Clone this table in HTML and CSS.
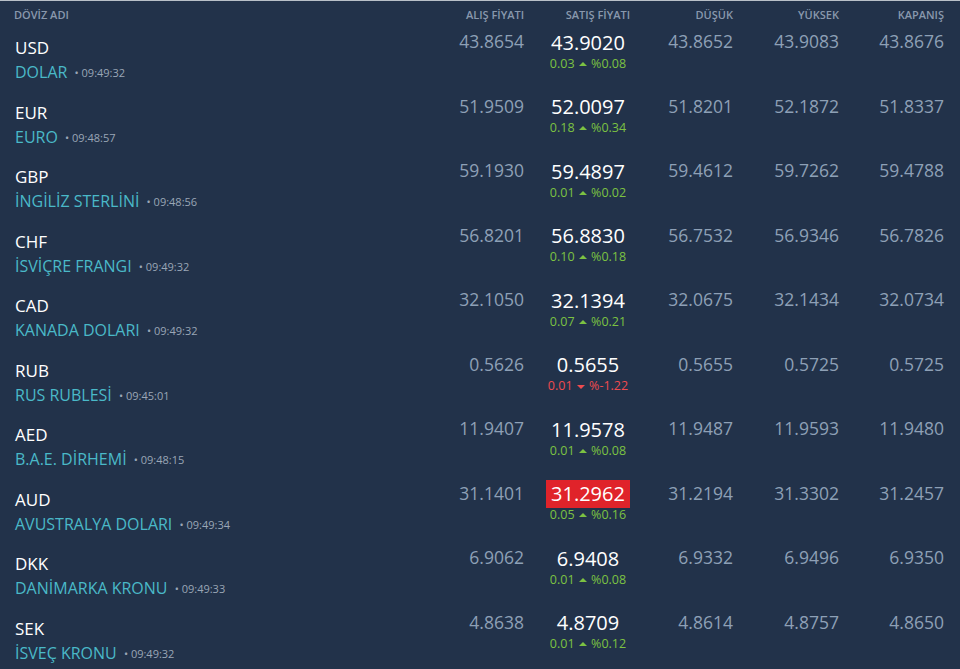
FILE: index.html
```html
<!DOCTYPE html>
<html lang="tr">
<head>
<meta charset="utf-8">
<link rel="stylesheet" href="styles.css">
</head>
<body>
<div class="table">
  <div class="row head">
    <div class="c-name">DÖVİZ ADI</div>
    <div class="c-num">ALIŞ FİYATI</div>
    <div class="c-num">SATIŞ FİYATI</div>
    <div class="c-num">DÜŞÜK</div>
    <div class="c-num">YÜKSEK</div>
    <div class="c-num">KAPANIŞ</div>
  </div>

  <div class="row">
    <div class="c-name"><div class="code">USD</div><div class="name">DOLAR <span class="time">• 09:49:32</span></div></div>
    <div class="c-num val">43.8654</div>
    <div class="c-sell"><span class="sell">43.9020</span><span class="chg up">0.03 <i class="tri"></i> %0.08</span></div>
    <div class="c-num val">43.8652</div>
    <div class="c-num val">43.9083</div>
    <div class="c-num val">43.8676</div>
  </div>

  <div class="row">
    <div class="c-name"><div class="code">EUR</div><div class="name">EURO <span class="time">• 09:48:57</span></div></div>
    <div class="c-num val">51.9509</div>
    <div class="c-sell"><span class="sell">52.0097</span><span class="chg up">0.18 <i class="tri"></i> %0.34</span></div>
    <div class="c-num val">51.8201</div>
    <div class="c-num val">52.1872</div>
    <div class="c-num val">51.8337</div>
  </div>

  <div class="row">
    <div class="c-name"><div class="code">GBP</div><div class="name">İNGİLİZ STERLİNİ <span class="time">• 09:48:56</span></div></div>
    <div class="c-num val">59.1930</div>
    <div class="c-sell"><span class="sell">59.4897</span><span class="chg up">0.01 <i class="tri"></i> %0.02</span></div>
    <div class="c-num val">59.4612</div>
    <div class="c-num val">59.7262</div>
    <div class="c-num val">59.4788</div>
  </div>

  <div class="row">
    <div class="c-name"><div class="code">CHF</div><div class="name">İSVİÇRE FRANGI <span class="time">• 09:49:32</span></div></div>
    <div class="c-num val">56.8201</div>
    <div class="c-sell"><span class="sell">56.8830</span><span class="chg up">0.10 <i class="tri"></i> %0.18</span></div>
    <div class="c-num val">56.7532</div>
    <div class="c-num val">56.9346</div>
    <div class="c-num val">56.7826</div>
  </div>

  <div class="row">
    <div class="c-name"><div class="code">CAD</div><div class="name">KANADA DOLARI <span class="time">• 09:49:32</span></div></div>
    <div class="c-num val">32.1050</div>
    <div class="c-sell"><span class="sell">32.1394</span><span class="chg up">0.07 <i class="tri"></i> %0.21</span></div>
    <div class="c-num val">32.0675</div>
    <div class="c-num val">32.1434</div>
    <div class="c-num val">32.0734</div>
  </div>

  <div class="row">
    <div class="c-name"><div class="code">RUB</div><div class="name">RUS RUBLESİ <span class="time">• 09:45:01</span></div></div>
    <div class="c-num val">0.5626</div>
    <div class="c-sell"><span class="sell">0.5655</span><span class="chg down">0.01 <i class="tri"></i> %-1.22</span></div>
    <div class="c-num val">0.5655</div>
    <div class="c-num val">0.5725</div>
    <div class="c-num val">0.5725</div>
  </div>

  <div class="row">
    <div class="c-name"><div class="code">AED</div><div class="name">B.A.E. DİRHEMİ <span class="time">• 09:48:15</span></div></div>
    <div class="c-num val">11.9407</div>
    <div class="c-sell"><span class="sell">11.9578</span><span class="chg up">0.01 <i class="tri"></i> %0.08</span></div>
    <div class="c-num val">11.9487</div>
    <div class="c-num val">11.9593</div>
    <div class="c-num val">11.9480</div>
  </div>

  <div class="row">
    <div class="c-name"><div class="code">AUD</div><div class="name">AVUSTRALYA DOLARI <span class="time">• 09:49:34</span></div></div>
    <div class="c-num val">31.1401</div>
    <div class="c-sell"><span class="sell flash">31.2962</span><span class="chg up">0.05 <i class="tri"></i> %0.16</span></div>
    <div class="c-num val">31.2194</div>
    <div class="c-num val">31.3302</div>
    <div class="c-num val">31.2457</div>
  </div>

  <div class="row">
    <div class="c-name"><div class="code">DKK</div><div class="name">DANİMARKA KRONU <span class="time">• 09:49:33</span></div></div>
    <div class="c-num val">6.9062</div>
    <div class="c-sell"><span class="sell">6.9408</span><span class="chg up">0.01 <i class="tri"></i> %0.08</span></div>
    <div class="c-num val">6.9332</div>
    <div class="c-num val">6.9496</div>
    <div class="c-num val">6.9350</div>
  </div>

  <div class="row">
    <div class="c-name"><div class="code">SEK</div><div class="name">İSVEÇ KRONU <span class="time">• 09:49:32</span></div></div>
    <div class="c-num val">4.8638</div>
    <div class="c-sell"><span class="sell">4.8709</span><span class="chg up">0.01 <i class="tri"></i> %0.12</span></div>
    <div class="c-num val">4.8614</div>
    <div class="c-num val">4.8757</div>
    <div class="c-num val">4.8650</div>
  </div>
</div>
</body>
</html>
```

FILE: styles.css
```css
* { box-sizing: border-box; }
html, body {
  margin: 0;
  padding: 0;
  background: #22324a;
  height: 669px;
  overflow: hidden;
}
body {
  font-family: "Open Sans", "Noto Sans", sans-serif;
  border-top: 1px solid #b9c0c8;
}
.table {
  width: 960px;
  padding-right: 16px;
}
.row {
  display: grid;
  grid-template-columns: 418px 106px 106px 103px 106px 105px;
  height: 64.5px;
}
.row.head {
  height: 29px;
  font-size: 11px;
  font-weight: 600;
  color: #8998ad;
  line-height: 27px;
}
.c-name { padding-left: 15px; }
.c-num { text-align: right; }
.head .c-name { padding-left: 14px; }
.code {
  color: #ffffff;
  font-size: 17px;
  line-height: 24px;
  padding-top: 6px;
}
.name {
  color: #4ab9c8;
  font-size: 16px;
  line-height: 24px;
  white-space: nowrap;
}
.time {
  color: #9aa6b6;
  font-size: 11px;
  margin-left: 3px;
  vertical-align: 1px;
}
.val {
  color: #8ea0b6;
  font-size: 17.5px;
  line-height: 23px;
}
.c-sell {
  display: flex;
  flex-direction: column;
  align-items: center;
  padding-left: 22px;
  margin-top: -1.5px;
}
.sell {
  color: #ffffff;
  font-size: 20px;
  line-height: 28px;
  padding: 0 5px;
}
.sell.flash { background: #e0232a; }
.chg {
  font-size: 12.5px;
  line-height: 14px;
  white-space: nowrap;
}
.chg.up { color: #7cc242; }
.chg.down { color: #ef4b4f; }
.tri {
  display: inline-block;
  width: 0;
  height: 0;
  border-left: 4.5px solid transparent;
  border-right: 4.5px solid transparent;
  vertical-align: 2px;
  margin: 0 1px;
}
.up .tri { border-bottom: 4.5px solid #7cc242; }
.down .tri { border-top: 4.5px solid #ef4b4f; vertical-align: 1px; }
```
